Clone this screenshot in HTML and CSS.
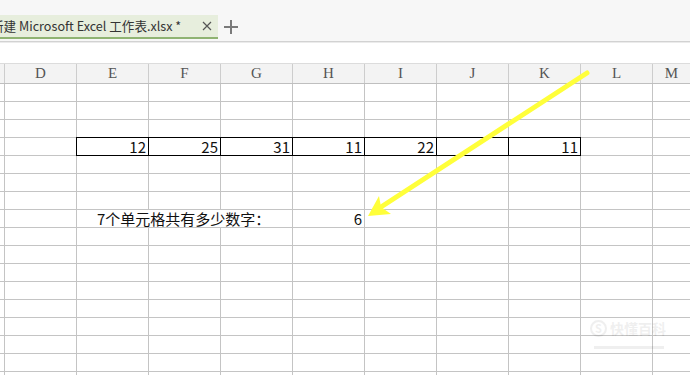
FILE: index.html
```html
<!DOCTYPE html>
<html lang="zh-CN">
<head>
    <meta charset="UTF-8">
    <meta name="viewport" content="width=device-width, initial-scale=1.0">
    <title>新建 Microsoft Excel 工作表.xlsx</title>
    <link rel="stylesheet" href="styles.css">
</head>
<body>
    <div class="tabbar">
        <div class="tab">
            <span class="tab-title">新建 Microsoft Excel 工作表.xlsx *</span>
            <svg class="tab-close" width="10" height="10" viewBox="0 0 10 10">
                <path d="M1 1 L9 9 M9 1 L1 9" stroke="#555" stroke-width="1.2" fill="none"/>
            </svg>
        </div>
        <svg class="tab-add" width="14" height="14" viewBox="0 0 14 14">
            <path d="M7 0 V14 M0 7 H14" stroke="#7a7a7a" stroke-width="2" fill="none"/>
        </svg>
    </div>
    <div class="gap"></div>

    <div class="col-heads">
        <div class="col-head"></div>
        <div class="col-head">D</div>
        <div class="col-head">E</div>
        <div class="col-head">F</div>
        <div class="col-head">G</div>
        <div class="col-head">H</div>
        <div class="col-head">I</div>
        <div class="col-head">J</div>
        <div class="col-head">K</div>
        <div class="col-head">L</div>
        <div class="col-head last">M</div>
    </div>

    <div class="sheet">
        <div class="data-row">
            <div class="cell">12</div>
            <div class="cell">25</div>
            <div class="cell">31</div>
            <div class="cell">11</div>
            <div class="cell">22</div>
            <div class="cell"></div>
            <div class="cell">11</div>
        </div>
        <div class="label">7个单元格共有多少数字：</div>
        <div class="count">6</div>
    </div>

    <svg class="arrow" width="690" height="375" viewBox="0 0 690 375">
        <line x1="587" y1="73" x2="381" y2="207" stroke="#ffff3a" stroke-width="5" stroke-linecap="round"/>
        <polygon points="368,216 379,196 381,207 391,214" fill="#ffff3a"/>
    </svg>

    <div class="watermark">
        <div class="wm-top">
            <span class="wm-logo">S</span>
            <span class="wm-text">快懂百科</span>
        </div>
        <div class="wm-line"></div>
    </div>
</body>
</html>
```

FILE: styles.css
```css
* { margin: 0; padding: 0; box-sizing: border-box; }
html, body { height: 100%; overflow: hidden; }
body { font-family: "Noto Sans CJK SC", "Liberation Sans", sans-serif; background: #fff; color: #111; position: relative; }

.tabbar { height: 42px; background: #f7f7f7; border-bottom: 1px solid #d2d2d2; box-shadow: 0 1px 0 #ebebeb; display: flex; align-items: flex-start; overflow: hidden; }
.tab { margin-top: 15px; width: 218px; height: 24px; background: #e7eedd; border-bottom: 2px solid #8fb372; display: flex; align-items: center; justify-content: space-between; padding-right: 6px; overflow: hidden; }
.tab-title { margin-left: -9px; font-size: 12.6px; color: #333; white-space: nowrap; line-height: 22px; }
.tab-close { flex-shrink: 0; }
.tab-add { margin-left: 6px; margin-top: 20px; }

.gap { height: 21px; }

.col-heads { display: grid; grid-template-columns: 5px repeat(9, 72px) 1fr; height: 21px; background: #f3f3f3; border-top: 1px solid #dcdcdc; border-bottom: 1px solid #bfbfbf; }
.col-head { border-right: 1px solid #cdcdcd; font-family: "Liberation Serif", "DejaVu Serif", serif; font-size: 15px; color: #555; text-align: center; line-height: 19px; }
.col-head.last { border-right: none; }

.sheet {
    height: 291px;
    display: grid;
    grid-template-columns: 5px repeat(9, 72px) 1fr;
    grid-auto-rows: 18px;
    background-color: #fff;
    background-image: linear-gradient(to right, #c4c4c4 1px, transparent 1px), linear-gradient(to bottom, #c4c4c4 1px, transparent 1px);
    background-size: 72px 18px;
    background-position: 4px -1px;
    font-size: 15px;
}

.data-row { grid-row: 4; grid-column: 3 / 10; margin: -1px 0 0 -1px; display: flex; background: #fff; border-top: 1px solid #000; border-left: 1px solid #000; border-bottom: 1px solid #000; }
.cell { width: 72px; border-right: 1px solid #000; text-align: right; padding-right: 2px; line-height: 17px; }

.label { grid-row: 8; grid-column: 3 / 6; background: #fff; border-right: 1px solid #c4c4c4; border-bottom: 1px solid #c4c4c4; padding-left: 20px; line-height: 17px; white-space: nowrap; }
.count { grid-row: 8; grid-column: 6; text-align: right; padding-right: 3px; line-height: 17px; }

.arrow { position: absolute; top: 0; left: 0; pointer-events: none; }

.watermark { position: absolute; left: 590px; top: 318px; opacity: 0.06; color: #000; pointer-events: none; }
.wm-top { display: flex; align-items: center; gap: 3px; }
.wm-logo { width: 17px; height: 17px; border-radius: 50%; border: 2px solid #000; font-size: 11px; font-weight: bold; line-height: 13px; text-align: center; }
.wm-text { font-size: 14px; font-weight: bold; }
.wm-line { margin: 8px 0 0 4px; width: 70px; height: 3px; background: #000; }
```
